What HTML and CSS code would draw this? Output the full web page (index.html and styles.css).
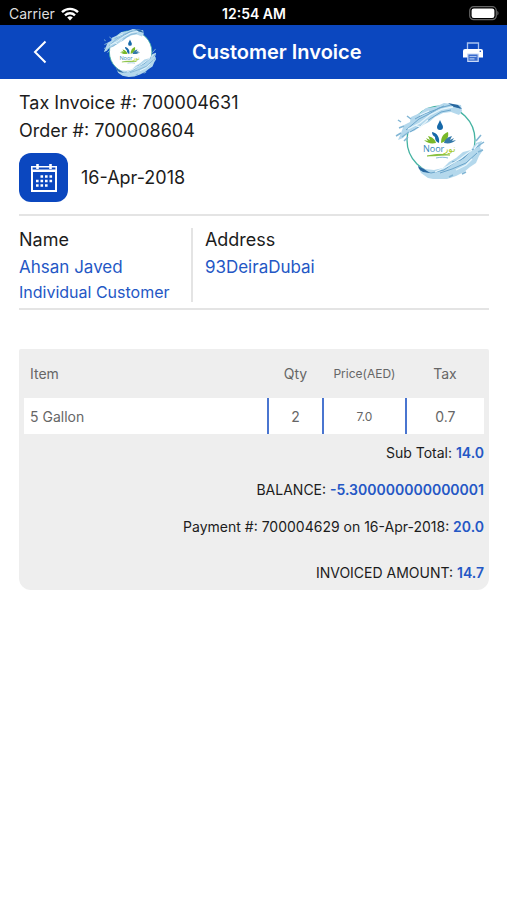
FILE: index.html
```html
<!DOCTYPE html>
<html lang="en">

<head>
    <meta charset="UTF-8">
    <meta name="viewport" content="width=device-width, initial-scale=1.0">
    <title>Customer Invoice</title>
    <link rel="stylesheet" href="styles.css">
</head>

<body>
    <div class="status-bar">
        <div class="carrier">
            <span>Carrier</span>
            <svg width="18" height="14" viewBox="0 0 18 14" fill="none" stroke="#fff" stroke-width="2.4">
                <path d="M1 5.2a11.4 11.4 0 0 1 16 0M4 8.3a7.2 7.2 0 0 1 10 0"/>
                <path d="M6.2 10.6a4 4 0 0 1 5.6 0L9 13.6z" fill="#fff" stroke="none"/>
            </svg>
        </div>
        <div class="time">12:54 AM</div>
        <svg class="battery" width="30" height="15" viewBox="0 0 30 15">
            <rect x=".7" y=".7" width="26.6" height="13" rx="4" fill="none" stroke="#666" stroke-width="1.2"/>
            <rect x="2.6" y="2.5" width="22.8" height="9.4" rx="2.2" fill="#fff"/>
            <path d="M28.3 5c1.6.6 1.6 3.8 0 4.400z" fill="#666"/>
        </svg>
    </div>

    <header class="nav-bar">
        <button class="back" type="button" aria-label="Back">
            <svg width="14" height="24" viewBox="0 0 14 24" fill="none" stroke="#fff" stroke-width="2">
                <path d="M12.5 1.5L2 12l10.5 10.5"/>
            </svg>
        </button>
        <svg class="nav-logo" viewBox="9 5 82 80">
            <g id="logo">
                <circle cx="51" cy="45" r="34" fill="#fff" stroke="#45b3a2" stroke-width="1.3"/>
                <!-- upper splash -->
                <path d="M11 38l3-8 6-3 1-5 9-4 6-5 9-1 9-4 8 1 9 1 1 6-3 4-8-3-8 1-8 4-6 5-8 4-7 5-7 2-4 5-5 2z" fill="#b4d8ec"/>
                <path d="M16 35l13-11 10-5 10-6 12-3 9 3M20 37l12-7 8-6 11-7 10-2M25 24l9-5 11-4 9-4" fill="none" stroke="#6ba5cb" stroke-width="1"/>
                <path d="M58 8l10 2 4 4-8-2z" fill="#28679f"/>
                <path d="M18 34l12-6 10-8 12-6 11-2M25 30l5 2 8-7M30 20l9-4" fill="none" stroke="#e8f6fc" stroke-width="1.3"/>
                <path d="M8 25l3 2M9 33l5-2M6 41l5-3M12 42l7-5M14 46l4-4M17 21l4 3" stroke="#82b6d5" stroke-width="1.5"/>
                <!-- lower splash -->
                <path d="M28 71l7 3 9 1 9-2 6-6 7-4 7-6 8-2 5-7 6-2-2 7 3 2-4 6-3 7-6 4-6 5-8 4-9 3-9 1-10-2-7-5z" fill="#b4d8ec"/>
                <path d="M30 75l11 3 13-3 11-8 9-4 8-8 8-5M50 78l12-4 14-6 11-10M62 67l9-2 8-8" fill="none" stroke="#6ba5cb" stroke-width="1"/>
                <path d="M28 71l6 3 6 4-7-1-4-3z" fill="#28679f"/>
                <path d="M45 77l13-6 12-7 12-9M66 75l10-5 6-6M84 54l4-5" fill="none" stroke="#e8f6fc" stroke-width="1.3"/>
                <path d="M86 46l5-6M88 51l6-4M88 57l5-2M59 82l4-2M72 79l4-2" stroke="#82b6d5" stroke-width="1.5"/>
                <!-- drop and leaves -->
                <path d="M50 25c1 3 3 5 3 7a3 3 0 0 1-6 0c0-2 2-4 3-7z" fill="#1668a8"/>
                <path d="M42 37c5 1 8 5 7 11-3-1-4-3-4-6-2-1-3-3-3-5z" fill="#1668a8"/>
                <path d="M58 37c1 5-1 9-7 11 0-6 2-9 7-11z" fill="#79b829"/>
                <path d="M38 41c4 1 7 3 8 7-5 1-9 0-12-3l4 1-2-3 4 2z" fill="#79b829"/>
                <path d="M62 41c-4 1-7 3-8 7 5 1 9 0 12-3l-4 1 2-3-4 2z" fill="#3479a8"/>
                <text class="logo-text" x="33" y="57" fill="#3488ba">Noor</text>
                <text class="logo-text" x="54" y="57" fill="#a5c927">نور</text>
                <path d="M37 61c8-2 15-2 23-1-8 0-14 1-23 1z" fill="#79b829" stroke="#79b829" stroke-width=".6"/>
                <path d="M46 63c5-1 8-1 12 0" fill="none" stroke="#3488ba" stroke-width=".6"/>
            </g>
        </svg>
        <h1>Customer Invoice</h1>
        <button class="print" type="button" aria-label="Print">
            <svg width="20" height="20" viewBox="0 0 20 20">
                <path d="M4.500 8V1h11v7" fill="none" stroke="#a9c3f0" stroke-width="1.300"/>
                <path d="M2 7h16a2 2 0 0 1 2 2v6.500H0V9a2 2 0 0 1 2-2z" fill="#fff"/>
                <circle cx="17.300" cy="9.300" r=".8" fill="#0b47bf"/>
                <path d="M4.800 12h10.400v7.300H4.800z" fill="#3b6ccd" stroke="#c9d9f7" stroke-width="1.200"/>
                <path d="M6.500 14.500h7M6.500 16.800h5" stroke="#a9c3f0" stroke-width="1.200"/>
            </svg>
        </button>
    </header>

    <main>
        <section class="summary">
            <div>
                <p>Tax Invoice #: 700004631</p>
                <p>Order #: 700008604</p>
                <div class="date">
                    <button class="calendar" type="button" aria-label="Choose date">
                        <svg width="26" height="28" viewBox="0 0 26 28">
                            <path d="M1 3h24v24H1zM1 7h24" fill="none" stroke="#fff" stroke-width="2"/>
                            <path d="M1 3h24v3H1z" fill="#0b47bf" stroke="#fff" stroke-width="1.200"/>
                            <path d="M6.500 0v5M19.500 0v5" stroke="#fff" stroke-width="2.600"/>
                            <path d="M9.500 12.500h13M5 17h17.500M5 21.500h13" stroke="#fff" stroke-width="2.600" stroke-dasharray="2.600 1.900"/>
                        </svg>
                    </button>
                    <span>16-Apr-2018</span>
                </div>
            </div>
            <svg class="brand" viewBox="5 6 90 78" role="img" aria-label="Noor"><use href="#logo"/></svg>
        </section>

        <section class="customer">
            <div class="name">
                <h2>Name</h2>
                <p>Ahsan Javed</p>
                <p class="type">Individual Customer</p>
            </div>
            <div class="address">
                <h2>Address</h2>
                <p>93DeiraDubai</p>
            </div>
        </section>

        <section class="invoice">
            <table>
                <thead>
                    <tr>
                        <th class="item">Item</th>
                        <th class="qty">Qty</th>
                        <th class="price">Price(AED)</th>
                        <th class="tax">Tax</th>
                    </tr>
                </thead>
                <tbody>
                    <tr>
                        <td class="item">5 Gallon</td>
                        <td class="qty">2</td>
                        <td class="price">7.0</td>
                        <td class="tax">0.7</td>
                    </tr>
                </tbody>
            </table>
            <div class="totals">
                <p>Sub Total: <b>14.0</b></p>
                <p>BALANCE: <b>-5.300000000000001</b></p>
                <p>Payment #: 700004629 on 16-Apr-2018: <b>20.0</b></p>
                <p class="amount">INVOICED AMOUNT: <b>14.7</b></p>
            </div>
        </section>
    </main>
</body>

</html>
```
FILE: styles.css
```css
* {
    box-sizing: border-box;
}

body {
    margin: 0;
    background-color: #fff;
    color: #1c1c1c;
    font-family: Inter, "Noto Sans", sans-serif;
    font-size: 18px;
}

h1,
h2,
p {
    margin: 0;
    font-weight: 400;
}

button {
    padding: 0;
    border: none;
    background: none;
    cursor: pointer;
}

svg {
    display: block;
}

.logo-text {
    font-family: "Open Sans", "DejaVu Sans", sans-serif;
    font-size: 9px;
}

.status-bar {
    display: grid;
    grid-template-columns: 1fr auto 1fr;
    align-items: center;
    height: 25px;
    padding: 2px 8px 0 9px;
    background-color: #000;
    color: #fff;
    font-size: 14px;
}

.carrier {
    display: flex;
    align-items: center;
    gap: 6px;
    color: #ddd;
}

.time {
    font-weight: 600;
}

.battery {
    justify-self: end;
}

.nav-bar {
    display: grid;
    grid-template-columns: 104px 52px 1fr 52px;
    align-items: center;
    height: 54px;
    background-color: #0b47bf;
    color: #fff;
}

.nav-bar h1 {
    padding-left: 36px;
    font-size: 20px;
    font-weight: 600;
}

.back {
    width: 44px;
    height: 44px;
    margin-left: 18px;
}

.back svg {
    margin: 0 auto;
}

.nav-logo {
    width: 52px;
    height: 50px;
}

.print {
    width: 44px;
    height: 44px;
    margin-left: -4px;
}

.print svg {
    margin: 0 auto;
}

main {
    padding: 10px 18px 0 19px;
}

.summary {
    display: flex;
    justify-content: space-between;
    padding-bottom: 12px;
    border-bottom: 2px solid #e4e4e4;
}

.summary p {
    line-height: 28px;
}

.date {
    display: flex;
    align-items: center;
    gap: 13px;
    margin-top: 8px;
}

.calendar {
    width: 49px;
    height: 49px;
    border-radius: 12px;
    background-color: #0b47bf;
}

.calendar svg {
    margin: 0 auto;
}

.brand {
    width: 90px;
    height: 78px;
    margin: 12px 4px 0 0;
}

.customer {
    display: flex;
    padding: 12px 0 6px;
    border-bottom: 2px solid #e4e4e4;
}

.customer h2 {
    font-size: 18px;
    line-height: 24px;
}

.customer p {
    color: #2457c5;
    font-size: 17px;
    line-height: 30px;
}

.customer .type {
    font-size: 16px;
    line-height: 20px;
}

.name {
    width: 37%;
    border-right: 2px solid #e4e4e4;
}

.address {
    flex: 1;
    padding-left: 12px;
}

.invoice {
    margin-top: 39px;
    padding: 0 5px 3px;
    border-radius: 2px 2px 12px 12px;
    background-color: #eee;
}

table {
    width: 100%;
    border-collapse: collapse;
    table-layout: fixed;
    color: #666;
    font-size: 14px;
}

th {
    height: 49px;
    padding: 0;
    font-weight: 400;
}

td {
    height: 36px;
    padding: 0;
    background-color: #fff;
    text-align: center;
}

td + td {
    border-left: 2px solid #4a75d0;
}

.item {
    padding-left: 6px;
    text-align: left;
}

.qty {
    width: 12%;
}

.price {
    width: 18%;
    font-size: 12px;
}

.tax {
    width: 17%;
}

.totals {
    text-align: right;
    font-size: 14px;
    line-height: 37px;
}

.totals b {
    color: #2457c5;
    font-weight: 600;
}

.totals .amount {
    margin-top: 14px;
    line-height: 28px;
}
```
